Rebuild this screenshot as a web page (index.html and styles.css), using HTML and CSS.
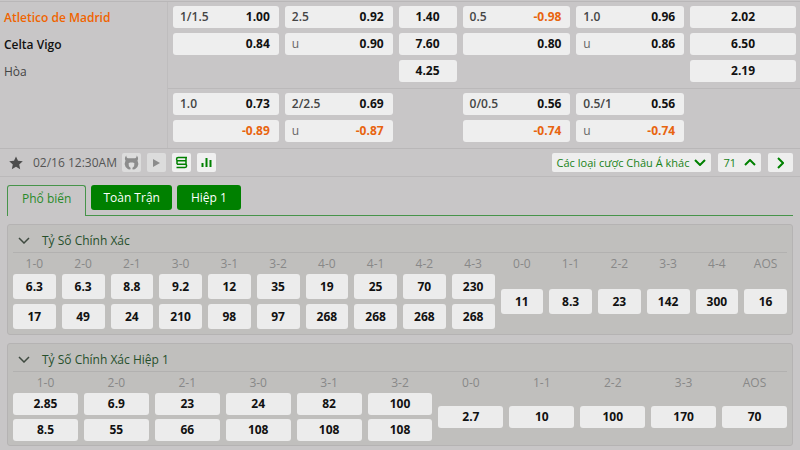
FILE: index.html
```
<!DOCTYPE html>
<html lang="vi">
<head>
	<meta charset="utf-8">
	<title>Atletico de Madrid - Celta Vigo</title>
	<link rel="stylesheet" href="styles.css">
</head>
<body>
	<div class="match">
		<div class="teams">
			<div class="team favorite">Atletico de Madrid</div>
			<div class="team">Celta Vigo</div>
			<div class="team draw">Hòa</div>
		</div>
		<div class="odds">
			<div class="odds-row">
				<div class="market">
					<button class="odd"><span class="line">1/1.5</span><b>1.00</b></button>
					<button class="odd"><b>0.84</b></button>
				</div>
				<div class="market">
					<button class="odd"><span class="line">2.5</span><b>0.92</b></button>
					<button class="odd"><span class="under">u</span><b>0.90</b></button>
				</div>
				<div class="market">
					<button class="odd single">1.40</button>
					<button class="odd single">7.60</button>
					<button class="odd single">4.25</button>
				</div>
				<div class="market">
					<button class="odd"><span class="line">0.5</span><b class="neg">-0.98</b></button>
					<button class="odd"><b>0.80</b></button>
				</div>
				<div class="market">
					<button class="odd"><span class="line">1.0</span><b>0.96</b></button>
					<button class="odd"><span class="under">u</span><b>0.86</b></button>
				</div>
				<div class="market">
					<button class="odd single">2.02</button>
					<button class="odd single">6.50</button>
					<button class="odd single">2.19</button>
				</div>
			</div>
			<div class="odds-row">
				<div class="market">
					<button class="odd"><span class="line">1.0</span><b>0.73</b></button>
					<button class="odd"><b class="neg">-0.89</b></button>
				</div>
				<div class="market">
					<button class="odd"><span class="line">2/2.5</span><b>0.69</b></button>
					<button class="odd"><span class="under">u</span><b class="neg">-0.87</b></button>
				</div>
				<div class="market"></div>
				<div class="market">
					<button class="odd"><span class="line">0/0.5</span><b>0.56</b></button>
					<button class="odd"><b class="neg">-0.74</b></button>
				</div>
				<div class="market">
					<button class="odd"><span class="line">0.5/1</span><b>0.56</b></button>
					<button class="odd"><span class="under">u</span><b class="neg">-0.74</b></button>
				</div>
				<div class="market"></div>
			</div>
		</div>
	</div>

	<div class="toolbar">
		<button class="star" aria-label="Favorite">
			<svg width="14" height="14" viewBox="0 0 14 14"><path fill="#4d4d4d" d="M7 .4l2 4.4 4.8.5-3.6 3.2 1 4.8L7 10.8l-4.2 2.5 1-4.8L.2 5.3l4.8-.5z"/></svg>
		</button>
		<span class="date">02/16 12:30AM</span>
		<div class="tools">
			<button class="tool off" aria-label="Bull">
				<svg width="15" height="15" viewBox="0 0 15 15"><path fill="#8c8c8c" d="M2.300.5C.8 2 .5 4 1.500 5.500L.6 9l1 3 2.500 2.300 2.200.2.400-1.500-1.800-1.700-.3-3L6 7.500h3l1.400.8-.3 3L8.300 13l.4 1.500 2.200-.2 2.500-2.300 1-3-.9-3.500c1-1.500.7-3.500-.8-5 0 1.600-.5 2.500-1.700 2.700H4C2.800 3 2.300 2.100 2.300.5z"/></svg>
			</button>
			<button class="tool off" aria-label="Live">
				<svg width="7" height="8" viewBox="0 0 7 8"><path fill="#8c8c8c" d="M0 0l7 4-7 4z"/></svg>
			</button>
			<button class="tool" aria-label="Parlay">
				<svg width="13" height="13" viewBox="0 0 13 13" fill="none" stroke="#008000" stroke-width="1.500"><path d="M12 1.500H3.200a1.600 1.600 0 000 3.300H10M3 4.800h7.500M11 1.500v3.300M2 4.800v3.400M11 4.800v3.400M2 8.200h8.500M3 8.200h7a1.600 1.600 0 010 3.300H1.500"/></svg>
			</button>
			<button class="tool" aria-label="Statistics">
				<svg width="11" height="11" viewBox="0 0 11 11" fill="#008000"><path d="M.5 6h2v4h-2zM4.500 1h2v9h-2zM8.500 3h2v7h-2z"/></svg>
			</button>
		</div>
		<div class="more">
			<button class="pill">Các loại cược Châu Á khác
				<svg width="12" height="7" viewBox="0 0 12 7"><path d="M1 1l5 5 5-5"/></svg>
			</button>
			<button class="pill count">71
				<svg width="12" height="7" viewBox="0 0 12 7"><path d="M1 6l5-5 5 5"/></svg>
			</button>
			<button class="pill next" aria-label="Next">
				<svg width="7" height="12" viewBox="0 0 7 12"><path d="M1 1l5 5-5 5"/></svg>
			</button>
		</div>
	</div>

	<div class="tabs">
		<button class="tab active">Phổ biến</button>
		<button class="tab">Toàn Trận</button>
		<button class="tab">Hiệp 1</button>
	</div>

	<div class="panel">
		<button class="panel-title">
			<svg width="12" height="7" viewBox="0 0 12 7"><path d="M1 1l5 5 5-5"/></svg>
			Tỷ Số Chính Xác
		</button>
		<table class="scores tall">
			<tr>
				<th>1-0</th><th>2-0</th><th>2-1</th><th>3-0</th><th>3-1</th><th>3-2</th><th>4-0</th><th>4-1</th><th>4-2</th><th>4-3</th>
				<th>0-0</th><th>1-1</th><th>2-2</th><th>3-3</th><th>4-4</th><th>AOS</th>
			</tr>
			<tr>
				<td><button>6.3</button></td>
				<td><button>6.3</button></td>
				<td><button>8.8</button></td>
				<td><button>9.2</button></td>
				<td><button>12</button></td>
				<td><button>35</button></td>
				<td><button>19</button></td>
				<td><button>25</button></td>
				<td><button>70</button></td>
				<td><button>230</button></td>
				<td rowspan="2"><button>11</button></td>
				<td rowspan="2"><button>8.3</button></td>
				<td rowspan="2"><button>23</button></td>
				<td rowspan="2"><button>142</button></td>
				<td rowspan="2"><button>300</button></td>
				<td rowspan="2"><button>16</button></td>
			</tr>
			<tr>
				<td><button>17</button></td>
				<td><button>49</button></td>
				<td><button>24</button></td>
				<td><button>210</button></td>
				<td><button>98</button></td>
				<td><button>97</button></td>
				<td><button>268</button></td>
				<td><button>268</button></td>
				<td><button>268</button></td>
				<td><button>268</button></td>
			</tr>
		</table>
	</div>

	<div class="panel">
		<button class="panel-title">
			<svg width="12" height="7" viewBox="0 0 12 7"><path d="M1 1l5 5 5-5"/></svg>
			Tỷ Số Chính Xác Hiệp 1
		</button>
		<table class="scores">
			<tr>
				<th>1-0</th><th>2-0</th><th>2-1</th><th>3-0</th><th>3-1</th><th>3-2</th>
				<th>0-0</th><th>1-1</th><th>2-2</th><th>3-3</th><th>AOS</th>
			</tr>
			<tr>
				<td><button>2.85</button></td>
				<td><button>6.9</button></td>
				<td><button>23</button></td>
				<td><button>24</button></td>
				<td><button>82</button></td>
				<td><button>100</button></td>
				<td rowspan="2"><button>2.7</button></td>
				<td rowspan="2"><button>10</button></td>
				<td rowspan="2"><button>100</button></td>
				<td rowspan="2"><button>170</button></td>
				<td rowspan="2"><button>70</button></td>
			</tr>
			<tr>
				<td><button>8.5</button></td>
				<td><button>55</button></td>
				<td><button>66</button></td>
				<td><button>108</button></td>
				<td><button>108</button></td>
				<td><button>108</button></td>
			</tr>
		</table>
	</div>
</body>
</html>
```
FILE: styles.css
```
*{
	box-sizing: border-box;
}

body{
	margin: 0;
	background-color: #c8c6c7;
	color: #111;
	font-family: "Open Sans", "Noto Sans", sans-serif;
	font-size: 12px;
	line-height: 16px;
}

button{
	border: 0;
	padding: 0;
	background: none;
	color: inherit;
	font: inherit;
	cursor: pointer;
}

svg{
	display: block;
}

/* teams + main odds */
.match{
	display: flex;
	margin-top: 1px;
	border-top: 1px solid #b9b7b8;
	border-bottom: 1px solid #b9b7b8;
}

.teams{
	width: 21%;
	padding: 2px 4px;
	border-right: 1px solid #bfbdbe;
}

.team{
	font-weight: 600;
	line-height: 27px;
}

.favorite{
	color: #f06400;
}

.draw{
	font-weight: normal;
	color: #444;
}

.odds{
	flex: 1;
}

.odds-row{
	display: grid;
	grid-template-columns: 106fr 108fr 58fr 108fr 108fr 106fr;
	gap: 6px;
	padding: 4px 4px 6px 5px;
}

.odds-row + .odds-row{
	border-top: 1px solid #bbb9ba;
}

.market{
	display: flex;
	flex-direction: column;
	gap: 5px;
}

.odd{
	display: flex;
	align-items: center;
	height: 22px;
	padding: 0 9px 0 7px;
	border-radius: 3px;
	background-color: #eee;
	font-weight: bold;
}

.odd b{
	margin-left: auto;
	font-weight: bold;
}

.odd.single{
	justify-content: center;
	padding: 0;
}

.line{
	color: #444;
	font-weight: 600;
}

.under{
	color: #666;
	font-weight: normal;
}

.odd .neg{
	color: #e8640f;
}

/* date + tools */
.toolbar{
	display: flex;
	align-items: center;
	height: 28px;
	padding: 0 7px 0 9px;
	border-bottom: 1px solid #bbb9ba;
}

.date{
	margin-left: 10px;
	color: #555;
}

.tools{
	display: flex;
	gap: 6px;
	margin-left: 5px;
}

.tool{
	display: flex;
	align-items: center;
	justify-content: center;
	width: 19px;
	height: 19px;
	border-radius: 2px;
	background-color: #f0f0f0;
}

.off{
	background-color: #dcdcdc;
}

.more{
	display: flex;
	gap: 7px;
	margin-left: auto;
}

.pill{
	display: flex;
	align-items: center;
	gap: 5px;
	height: 19px;
	padding: 0 5px;
	border-radius: 2px;
	background-color: #eee;
	color: #178217;
	font-size: 11px;
}

.pill svg{
	fill: none;
	stroke: #008000;
	stroke-width: 2;
}

.count{
	gap: 8px;
}

.next{
	padding: 0 9px;
}

/* tabs */
.tabs{
	display: flex;
	align-items: flex-start;
	gap: 5px;
	margin: 8px 7px 0;
	border-bottom: 1px solid #47944a;
}

.tab{
	min-width: 64px;
	height: 25px;
	padding: 0 12px;
	border-radius: 3px;
	background-color: #008000;
	color: #fff;
}

.active{
	height: 31px;
	margin-bottom: -1px;
	padding: 0 14px 4px;
	border: 1px solid #47944a;
	border-bottom: 0;
	border-radius: 3px 3px 0 0;
	background-color: #c8c6c7;
	color: #288a2a;
}

/* correct score panels */
.panel{
	margin: 8px 7px;
	padding: 0 2px;
	border: 1px solid #b5b3b3;
	border-radius: 3px;
	background-color: #c0bfbd;
}

.panel:last-child{
	margin-bottom: 4px;
}

.panel-title{
	display: flex;
	align-items: center;
	gap: 12px;
	width: calc(100% - 6px);
	height: 28px;
	margin: 0 3px;
	padding: 4px 5px 0;
	border-bottom: 1px solid #b2b1b0;
	color: #264f2b;
}

.panel-title svg{
	fill: none;
	stroke: #3f4a40;
	stroke-width: 1.5;
}

.scores{
	width: 100%;
	table-layout: fixed;
	border-collapse: collapse;
}

.scores th{
	padding: 3px 0 2px;
	color: #888;
	font-weight: normal;
}

.scores td{
	padding: 0 3px 4px;
}

.scores button{
	display: block;
	width: 100%;
	height: 22px;
	border-radius: 3px;
	background-color: #ececec;
	font-weight: bold;
}

.tall td{
	padding-bottom: 5px;
}

.tall button{
	height: 25px;
}
```
